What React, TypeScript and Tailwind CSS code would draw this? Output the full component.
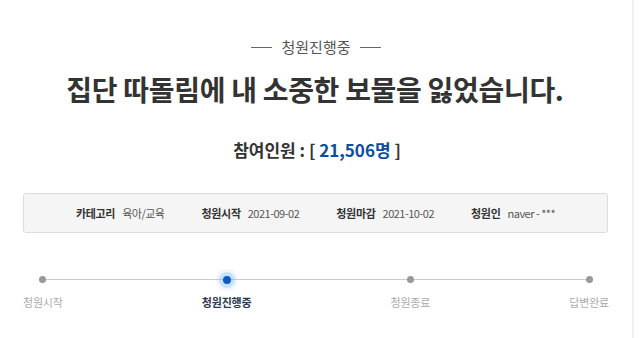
import React from 'react'

// ── Dados da petição ──────────────────
const INFO = [
    { label: '카테고리', value: '육아/교육' },
    { label: '청원시작', value: '2021-09-02' },
    { label: '청원마감', value: '2021-10-02' },
    { label: '청원인', value: 'naver - ***' },
]

const STEPS = [
    { label: '청원시작', active: false },
    { label: '청원진행중', active: true },
    { label: '청원종료', active: false },
    { label: '답변완료', active: false },
]

const FONT = { fontFamily: '"Noto Sans CJK KR", "Noto Sans", sans-serif' }

export default function App() {
    return (
        <div className="h-[338px] w-[640px] bg-white overflow-hidden" style={FONT}>
            <div className="h-full w-[634px] border-r-2 border-[#f1f1f1]">
                <div className="pt-[36px] flex items-center justify-center gap-[9px] text-[#555]">
                    <span className="w-[21px] h-px bg-[#666]" />
                    <span className="text-[15px] leading-[22px]">청원진행중</span>
                    <span className="w-[21px] h-px bg-[#666]" />
                </div>

                <h1 className="mt-[16px] text-center text-[28px] leading-[30px] font-bold text-[#333] tracking-[-0.3px] pr-[2px]">
                    집단 따돌림에 내 소중한 보물을 잃었습니다.
                </h1>

                <p className="mt-[34px] text-center text-[17px] leading-[24px] font-bold text-[#333] pl-[2px]">
                    참여인원 : [ <span className="text-[#0b4ea2]">21,506명</span> ]
                </p>

                <div className="mt-[31px] ml-[23px] w-[585px] h-[40px] rounded-[3px] border border-[#ddd] bg-[#f5f5f5] flex items-center justify-center gap-[37px] text-[11px]">
                    {INFO.map(item => (
                        <div key={item.label} className="flex items-center gap-[7px]">
                            <span className="font-bold text-[#333] tracking-[-0.3px]">{item.label}</span>
                            <span className="text-[#555] tracking-[-0.5px]">{item.value}</span>
                        </div>
                    ))}
                </div>

                <div className="relative mt-[43px] ml-[23px] w-[586px] flex justify-between">
                    <span className="absolute left-[18px] right-[19px] top-[3px] h-px bg-[#ccc]" />
                    {STEPS.map(step => (
                        <div key={step.label} className="relative flex flex-col items-center">
                            <div className="h-[7px] flex items-center justify-center">
                                {step.active ? (
                                    <span className="w-[8px] h-[8px] rounded-full bg-[#0a5bc4] shadow-[0_0_0_4px_rgba(90,160,255,0.25),0_0_0_7px_rgba(120,180,255,0.12)]" />
                                ) : (
                                    <span className="w-[7px] h-[7px] rounded-full bg-[#999]" />
                                )}
                            </div>
                            <span
                                className={
                                    step.active
                                        ? 'mt-[11px] text-[11px] leading-[16px] font-bold text-[#2b3a4d] tracking-[-0.2px]'
                                        : 'mt-[11px] text-[11px] leading-[16px] text-[#aaa] tracking-[-0.2px]'
                                }
                            >
                                {step.label}
                            </span>
                        </div>
                    ))}
                </div>
            </div>
        </div>
    )
}
